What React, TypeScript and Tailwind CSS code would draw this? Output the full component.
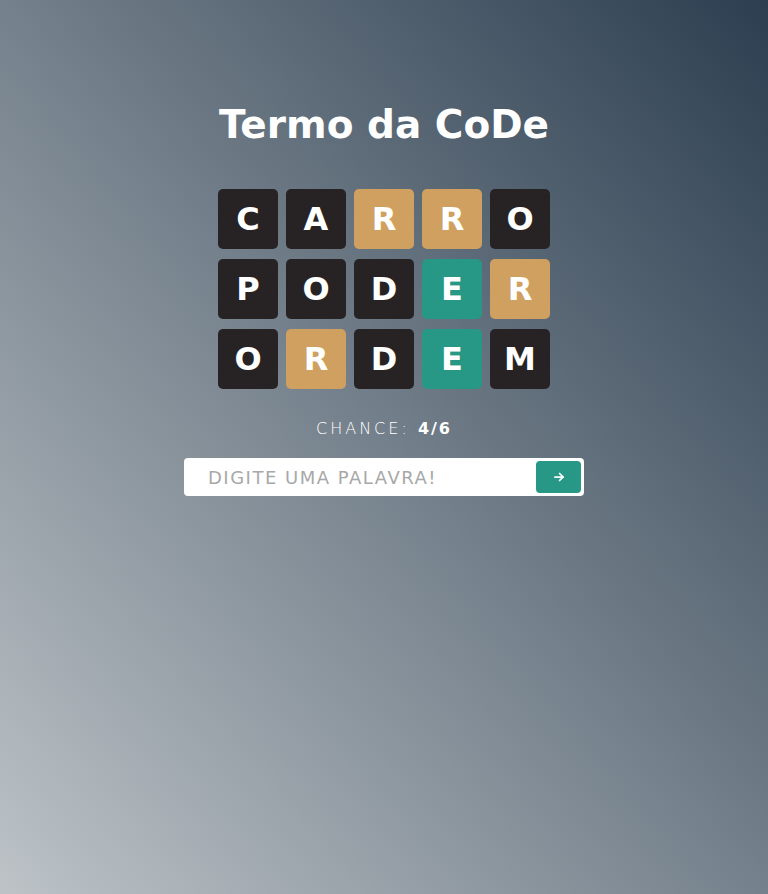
import React from "react";

type C = "d" | "y" | "g";
const rows: { l: string; c: C }[][] = [
  [
    { l: "C", c: "d" },
    { l: "A", c: "d" },
    { l: "R", c: "y" },
    { l: "R", c: "y" },
    { l: "O", c: "d" },
  ],
  [
    { l: "P", c: "d" },
    { l: "O", c: "d" },
    { l: "D", c: "d" },
    { l: "E", c: "g" },
    { l: "R", c: "y" },
  ],
  [
    { l: "O", c: "d" },
    { l: "R", c: "y" },
    { l: "D", c: "d" },
    { l: "E", c: "g" },
    { l: "M", c: "d" },
  ],
];

function Tile({ l, c }: { l: string; c: C }) {
  const bg =
    c === "d" ? "bg-[#272325]" : c === "y" ? "bg-[#cfa060]" : "bg-[#269885]";
  return (
    <div
      className={`${bg} w-[60px] h-[60px] rounded-[5px] flex items-center justify-center text-white text-[32px] font-extrabold`}
    >
      {l}
    </div>
  );
}

export default function App() {
  return (
    <div
      className="min-h-[894px] w-full bg-[linear-gradient(to_top_right,#bdc3c7,#2c3e50)] flex flex-col items-center"
      style={{ fontFamily: '"DejaVu Sans", "Noto Sans", sans-serif' }}
    >
      <h1 className="mt-[100px] text-white text-[39px] font-extrabold leading-[50px] tracking-[0px]">
        Termo da CoDe
      </h1>
      <div className="mt-[39px] flex flex-col gap-[10px]">
        {rows.map((r, i) => (
          <div key={i} className="flex gap-[8px]">
            {r.map((t, j) => (
              <Tile key={j} l={t.l} c={t.c} />
            ))}
          </div>
        ))}
      </div>
      <div className="mt-[29px] text-white text-[16px] tracking-[3px] leading-[22px] font-light">
        <span className="font-extralight">CHANCE: </span>
        <span className="font-bold tracking-[2px]">4/6</span>
      </div>
      <div className="mt-[18px] w-[400px] h-[38px] bg-white rounded-[4px] flex items-center pl-[24px] pr-[3px]">
        <input
          className="flex-1 outline-none bg-transparent text-[18px] tracking-[1.5px] text-[#999] placeholder:text-[#a8a8a8]"
          placeholder="DIGITE UMA PALAVRA!"
          style={{ fontFamily: '"DejaVu Sans", sans-serif' }}
        />
        <button className="w-[45px] h-[32px] rounded-[4px] bg-[#269885] flex items-center justify-center">
          <svg width="14" height="14" viewBox="0 0 24 24" fill="none" stroke="white" strokeWidth="3" strokeLinecap="round" strokeLinejoin="round">
            <path d="M5 12h14" />
            <path d="M13 6l6 6-6 6" />
          </svg>
        </button>
      </div>
    </div>
  );
}
